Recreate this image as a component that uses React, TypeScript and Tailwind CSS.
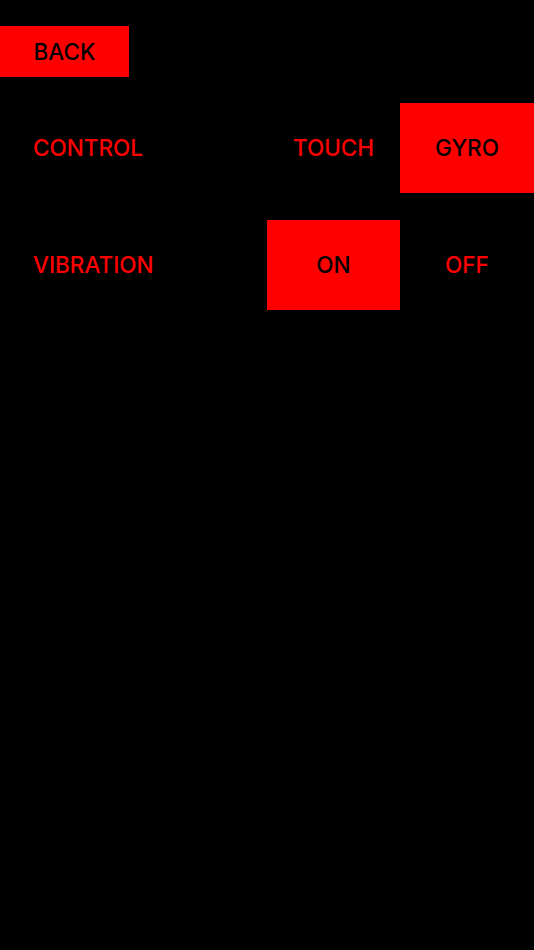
import { useState } from "react";

function Option({ label, active, onClick }: { label: string; active: boolean; onClick: () => void }) {
  return (
    <button
      onClick={onClick}
      className={`h-[90px] flex items-center justify-center text-[22.5px] font-medium ${active ? "bg-[#ff0000] text-black" : "bg-black text-[#ff0000]"}`}
    >
      {label}
    </button>
  );
}

export default function App() {
  const [control, setControl] = useState<"touch" | "gyro">("gyro");
  const [vibration, setVibration] = useState(true);

  return (
    <div className="w-full min-h-[950px] bg-black pt-[26px] font-['Inter',sans-serif]">
      <button className="w-[129px] h-[51px] bg-[#ff0000] text-black text-[22.5px] font-medium flex items-center justify-center">
        BACK
      </button>

      <div className="grid grid-cols-[267px_133px_134px] mt-[26px] gap-y-[27px]">
        <div className="h-[90px] flex items-center pl-[33px] text-[22.5px] font-medium text-[#ff0000]">CONTROL</div>
        <Option label="TOUCH" active={control === "touch"} onClick={() => setControl("touch")} />
        <Option label="GYRO" active={control === "gyro"} onClick={() => setControl("gyro")} />

        <div className="h-[90px] flex items-center pl-[33px] text-[22.5px] font-medium text-[#ff0000]">VIBRATION</div>
        <Option label="ON" active={vibration} onClick={() => setVibration(true)} />
        <Option label="OFF" active={!vibration} onClick={() => setVibration(false)} />
      </div>
    </div>
  );
}
